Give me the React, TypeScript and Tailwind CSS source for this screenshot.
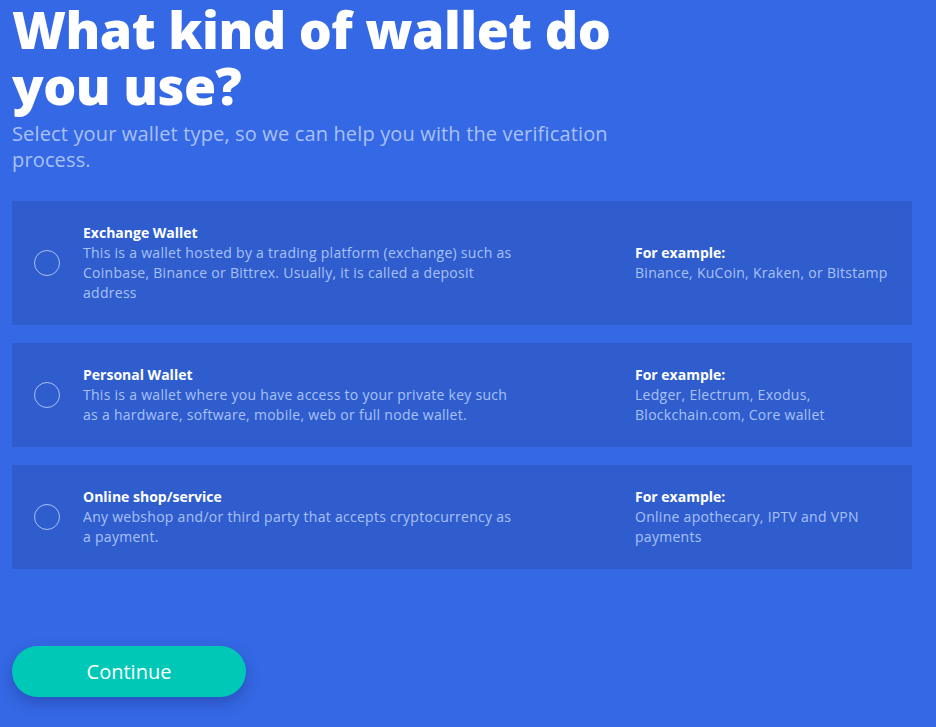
import { useState } from 'react';

const wallets = [
  {
    id: 'exchange',
    title: 'Exchange Wallet',
    desc: 'This is a wallet hosted by a trading platform (exchange) such as Coinbase, Binance or Bittrex. Usually, it is called a deposit address',
    example: 'Binance, KuCoin, Kraken, or Bitstamp',
  },
  {
    id: 'personal',
    title: 'Personal Wallet',
    desc: 'This is a wallet where you have access to your private key such as a hardware, software, mobile, web or full node wallet.',
    example: 'Ledger, Electrum, Exodus, Blockchain.com, Core wallet',
  },
  {
    id: 'shop',
    title: 'Online shop/service',
    desc: 'Any webshop and/or third party that accepts cryptocurrency as a payment.',
    example: 'Online apothecary, IPTV and VPN payments',
  },
];

export default function App() {
  const [selected, setSelected] = useState<string | null>(null);

  return (
    <div className="min-h-[727px] w-full bg-[#3568e4] px-3 pb-[30px] font-['Open_Sans','Liberation_Sans',sans-serif]">
      <h1 className="w-[630px] pt-[1px] text-[52px] font-extrabold leading-[56px] tracking-[-0.5px] text-white">
        What kind of wallet do you use?
      </h1>
      <p className="mt-[8px] w-[612px] text-[20px] leading-[26px] tracking-[0.15px] text-[#a9c1f6]">
        Select your wallet type, so we can help you with the verification process.
      </p>

      <ul className="mt-[28px] flex w-[900px] flex-col gap-[18px]">
        {wallets.map((w) => (
          <li key={w.id}>
            <button
              onClick={() => setSelected(w.id)}
              className="flex w-full items-center bg-[#2f5dce] py-[22px] pl-[22px] text-left tracking-[0.28px]"
            >
              <span className="flex h-[26px] w-[26px] flex-shrink-0 items-center justify-center rounded-full border-[1.5px] border-[#a9c1f6]">
                {selected === w.id && <span className="h-[14px] w-[14px] rounded-full bg-white" />}
              </span>
              <div className="ml-[23px] w-[436px] text-[14px] leading-[20px]">
                <div className="font-bold tracking-normal text-white">{w.title}</div>
                <div className="text-[#a9c1f6]">{w.desc}</div>
              </div>
              <div className="ml-[116px] w-[262px] text-[14px] leading-[20px]">
                <div className="font-bold tracking-normal text-white">For example:</div>
                <div className="text-[#a9c1f6]">{w.example}</div>
              </div>
            </button>
          </li>
        ))}
      </ul>

      <button className="mt-[77px] h-[51px] w-[234px] rounded-full bg-[#00c8b6] text-[20px] text-white shadow-[0_6px_14px_rgba(20,40,120,0.35)]">
        Continue
      </button>
    </div>
  );
}
